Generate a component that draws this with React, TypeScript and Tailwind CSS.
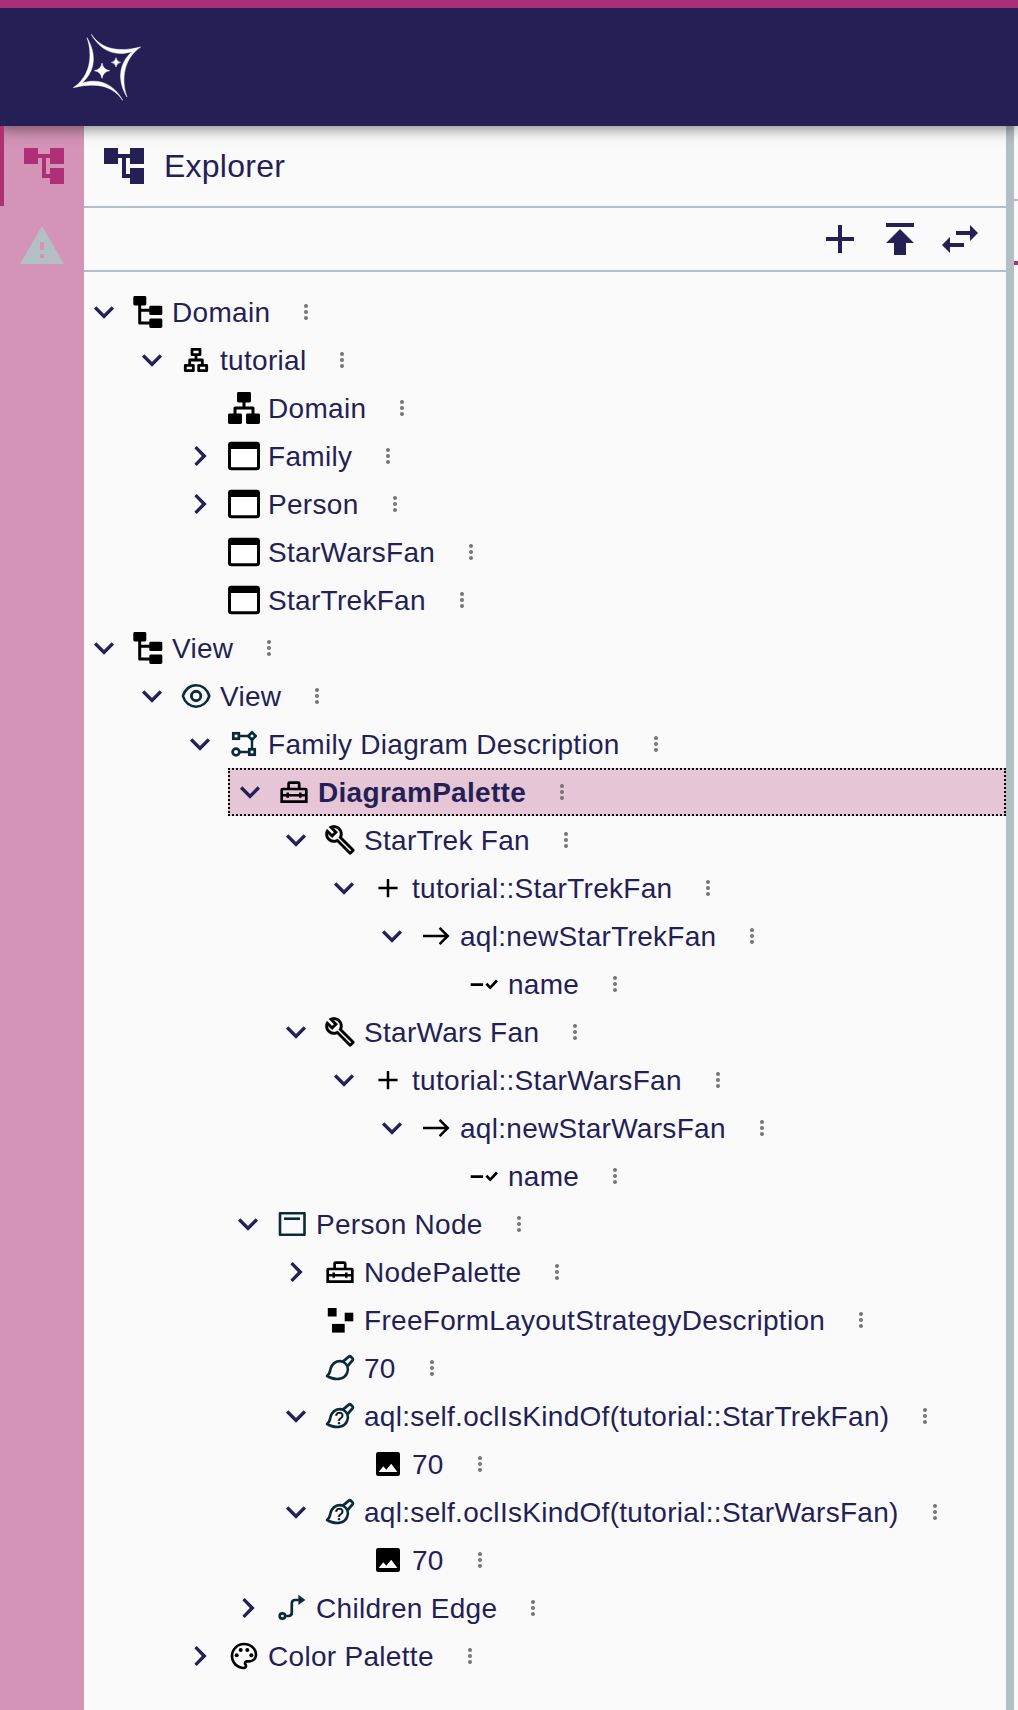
import React from "react";

type IconName =
  | "tree"
  | "package"
  | "domain"
  | "entity"
  | "eye"
  | "diagram"
  | "toolbox"
  | "wrench"
  | "plus"
  | "arrow"
  | "setValue"
  | "node"
  | "freeForm"
  | "brush"
  | "conditional"
  | "image"
  | "edge"
  | "palette";

type Item = {
  level: number;
  label: string;
  icon: IconName;
  state?: "open" | "closed";
  selected?: boolean;
};

const items: Item[] = [
  { level: 0, label: "Domain", icon: "tree", state: "open" },
  { level: 1, label: "tutorial", icon: "package", state: "open" },
  { level: 2, label: "Domain", icon: "domain" },
  { level: 2, label: "Family", icon: "entity", state: "closed" },
  { level: 2, label: "Person", icon: "entity", state: "closed" },
  { level: 2, label: "StarWarsFan", icon: "entity" },
  { level: 2, label: "StarTrekFan", icon: "entity" },
  { level: 0, label: "View", icon: "tree", state: "open" },
  { level: 1, label: "View", icon: "eye", state: "open" },
  { level: 2, label: "Family Diagram Description", icon: "diagram", state: "open" },
  { level: 3, label: "DiagramPalette", icon: "toolbox", state: "open", selected: true },
  { level: 4, label: "StarTrek Fan", icon: "wrench", state: "open" },
  { level: 5, label: "tutorial::StarTrekFan", icon: "plus", state: "open" },
  { level: 6, label: "aql:newStarTrekFan", icon: "arrow", state: "open" },
  { level: 7, label: "name", icon: "setValue" },
  { level: 4, label: "StarWars Fan", icon: "wrench", state: "open" },
  { level: 5, label: "tutorial::StarWarsFan", icon: "plus", state: "open" },
  { level: 6, label: "aql:newStarWarsFan", icon: "arrow", state: "open" },
  { level: 7, label: "name", icon: "setValue" },
  { level: 3, label: "Person Node", icon: "node", state: "open" },
  { level: 4, label: "NodePalette", icon: "toolbox", state: "closed" },
  { level: 4, label: "FreeFormLayoutStrategyDescription", icon: "freeForm" },
  { level: 4, label: "70", icon: "brush" },
  { level: 4, label: "aql:self.oclIsKindOf(tutorial::StarTrekFan)", icon: "conditional", state: "open" },
  { level: 5, label: "70", icon: "image" },
  { level: 4, label: "aql:self.oclIsKindOf(tutorial::StarWarsFan)", icon: "conditional", state: "open" },
  { level: 5, label: "70", icon: "image" },
  { level: 3, label: "Children Edge", icon: "edge", state: "closed" },
  { level: 2, label: "Color Palette", icon: "palette", state: "closed" },
];

const INK = "#0b2b3a";

const brushShape = (
  <g fill="none" stroke={INK} strokeWidth="2.7" strokeLinejoin="round">
    <path d="M3.1 24C6.8 22 5.4 17.6 7.8 13.8C10.4 9.6 15.4 7.9 19.2 9.9C23.8 12.4 24.8 17 23 21.2C20.6 26.9 13.6 28 7.8 26.1C5.8 25.5 4.6 24.8 3.1 24Z" />
    <path d="M18.8 9.6L25.2 4.4Q26 3.8 26.7 4.5L28.7 6.6Q29.3 7.3 28.7 8.1L23.6 14" />
  </g>
);

const icons: Record<IconName, React.ReactNode> = {
  tree: (
    <>
      <rect x="1.3" y="0" width="13" height="9.4" rx="1.4" />
      <rect x="17.3" y="9.7" width="13" height="9.4" rx="1.4" />
      <rect x="17.3" y="22.6" width="13" height="9.4" rx="1.4" />
      <path d="M7.7 8V27.1H18M7.7 14.2H18" fill="none" stroke="#000" strokeWidth="3" strokeLinejoin="round" />
    </>
  ),
  package: (
    <g fill="none" stroke="#000" strokeWidth="2.8" strokeLinejoin="round">
      <rect x="12" y="5.3" width="8" height="5.4" />
      <rect x="5.3" y="21.3" width="8" height="5.4" />
      <rect x="18.7" y="21.3" width="8" height="5.4" />
      <path d="M16 11.5V16M9.7 21V16H22.3V21" />
    </g>
  ),
  domain: (
    <>
      <rect x="9" y="0" width="14" height="10.4" rx="1.4" />
      <rect x="0" y="21.6" width="14" height="10.4" rx="1.4" />
      <rect x="18" y="21.6" width="14" height="10.4" rx="1.4" />
      <path d="M16 10V16M7 22V16H25V22" fill="none" stroke="#000" strokeWidth="3" strokeLinejoin="round" />
    </>
  ),
  entity: (
    <>
      <rect x="1.5" y="3.2" width="29" height="25.6" rx="1.8" fill="#fff" stroke="#000" strokeWidth="3" />
      <rect x="1.5" y="3" width="29" height="6" />
    </>
  ),
  eye: (
    <g fill="none" stroke={INK} strokeWidth="2.6">
      <path d="M2.9 16C4.8 9.4 10 5.2 16 5.2S27.2 9.4 29.3 16C27.2 22.6 22 26.7 16 26.7S4.8 22.6 2.9 16Z" strokeLinejoin="round" />
      <circle cx="16.1" cy="16" r="4.7" strokeWidth="2.9" />
    </g>
  ),
  diagram: (
    <g fill="none" stroke={INK} strokeWidth="2.7">
      <rect x="5.3" y="5.3" width="5.5" height="5.4" />
      <rect x="21.3" y="21.3" width="5.4" height="5.4" />
      <circle cx="8" cy="24" r="3.4" />
      <path d="M24 4.3L27.7 8L24 11.7L20.3 8Z" strokeLinejoin="round" />
      <path d="M11.5 8H20M24 12V21M11.8 24H20.5" strokeWidth="2.4" />
    </g>
  ),
  toolbox: (
    <g fill="none" stroke="#000" strokeWidth="2.7">
      <path d="M3.7 25.7V13.8Q3.7 13 4.5 13H27.5Q28.3 13 28.3 13.8V25.7Z" />
      <path d="M10.6 12.5V7.6Q10.6 6.6 11.6 6.6H20.2Q21.2 6.6 21.2 7.6V12.5" />
      <path d="M4 19.2H28M9.7 16.6V21.8M22.3 16.6V21.8" strokeWidth="2.5" />
    </g>
  ),
  wrench: (
    <path
      transform="scale(1.3333)"
      stroke="#000"
      strokeWidth="0.2"
      d="m22.61 18.99-9.08-9.08c.93-2.34.45-5.1-1.44-7C9.79.61 6.21.4 3.66 2.26L7.5 6.11 6.08 7.52 2.25 3.69C.39 6.23.6 9.82 2.9 12.11c1.86 1.86 4.57 2.35 6.89 1.48l9.11 9.11c.39.39 1.02.39 1.41 0l2.3-2.3c.4-.38.4-1.01 0-1.41zm-3 1.6-9.46-9.46c-.61.45-1.29.72-2 .82-1.36.2-2.79-.21-3.83-1.25C3.37 9.76 2.93 8.5 3 7.26l3.09 3.09 4.24-4.24-3.09-3.09c1.24-.07 2.49.37 3.44 1.31 1.08 1.08 1.49 2.57 1.24 3.96-.12.71-.42 1.37-.88 1.96l9.45 9.45-.88.89z"
    />
  ),
  plus: <path d="M16 7V25.3M6.4 16H25.6" fill="none" stroke="#000" strokeWidth="2.5" />,
  arrow: <path d="M3 16H28M19.6 7.9L27.8 16L19.6 24.1" fill="none" stroke="#000" strokeWidth="2.5" />,
  setValue: <path d="M2.7 16.6H15M18.4 15.8L22.2 19.6L29 12.5" fill="none" stroke="#000" strokeWidth="2.7" />,
  node: (
    <g fill="none" stroke={INK} strokeWidth="2.6">
      <rect x="4" y="5.3" width="24.5" height="21.5" strokeLinejoin="round" />
      <path d="M8 10.7H24" />
    </g>
  ),
  freeForm: (
    <>
      <rect x="3.8" y="4" width="8.8" height="8.5" />
      <rect x="20.7" y="8.7" width="8.6" height="8.6" />
      <rect x="8" y="19.9" width="12.7" height="8.7" />
    </>
  ),
  brush: brushShape,
  conditional: (
    <>
      {brushShape}
      <text
        x="15.3"
        y="23.7"
        textAnchor="middle"
        className="font-['Liberation_Sans',sans-serif] text-[16px]"
        fill="#000"
        stroke="#000"
        strokeWidth="0.4"
      >
        ?
      </text>
    </>
  ),
  image: (
    <>
      <rect x="4" y="4" width="24" height="24" rx="2.2" />
      <path d="M6.7 24L11.3 18.2L14.4 21.7L19.2 15.8L25.4 24Z" fill="#fafafa" />
    </>
  ),
  edge: (
    <>
      <g fill="none" stroke={INK} strokeWidth="2.7">
        <circle cx="6.4" cy="24" r="2.7" />
        <path d="M9.3 24H12.4Q15.8 24 15.8 20.6V11.4Q15.8 8 19.2 8H23" />
      </g>
      <path d="M22.4 2.8L29.4 8L22.4 13Z" fill={INK} />
    </>
  ),
  palette: (
    <g transform="scale(1.3333)">
      <path d="M12 22C6.49 22 2 17.51 2 12S6.49 2 12 2s10 4.04 10 9c0 3.31-2.69 6-6 6h-1.77c-.28 0-.5.22-.5.5 0 .12.05.23.13.33.41.47.64 1.06.64 1.67 0 1.38-1.12 2.5-2.5 2.5zm0-18c-4.41 0-8 3.59-8 8s3.59 8 8 8c.28 0 .5-.22.5-.5 0-.16-.08-.28-.14-.35-.41-.46-.63-1.05-.63-1.65 0-1.38 1.12-2.5 2.5-2.5H16c2.21 0 4-1.79 4-4 0-3.86-3.59-7-8-7z" />
      <circle cx="6.5" cy="11.5" r="1.5" />
      <circle cx="9.5" cy="7.5" r="1.5" />
      <circle cx="14.5" cy="7.5" r="1.5" />
      <circle cx="17.5" cy="11.5" r="1.5" />
    </g>
  ),
};

function Glyph({ d, className }: { d: string; className: string }) {
  return (
    <svg viewBox="0 0 24 24" fill="currentColor" className={`shrink-0 ${className}`}>
      <path d={d} />
    </svg>
  );
}

const ACCOUNT_TREE = "M22 11V3h-7v3H9V3H2v8h7V8h2v10h4v3h7v-8h-7v3h-2V8h2v3z";

function Row({ item }: { item: Item }) {
  return (
    <li className="flex h-12">
      <span className="shrink-0" style={{ width: item.level * 48 }} />
      <div
        className={
          item.selected
            ? "flex min-w-0 flex-1 items-center border-2 border-dotted border-black bg-[#e6c5d6]"
            : "flex min-w-0 flex-1 items-center"
        }
      >
        <span className="mr-2 size-10 shrink-0">
          {item.state === "open" && (
            <Glyph className="size-10" d="M16.59 8.59 12 13.17 7.41 8.59 6 10l6 6 6-6z" />
          )}
          {item.state === "closed" && (
            <Glyph className="size-10" d="M10 6 8.59 7.41 13.17 12l-4.58 4.59L10 18l6-6z" />
          )}
        </span>
        <svg viewBox="0 0 32 32" className="mr-2 size-8 shrink-0" fill="#000">
          {icons[item.icon]}
        </svg>
        <span
          className={
            item.selected
              ? "whitespace-nowrap pt-0.5 text-[28px] leading-10 font-bold tracking-[0.3px]"
              : "whitespace-nowrap pt-0.5 text-[28px] leading-10 tracking-[0.3px]"
          }
        >
          {item.label}
        </span>
        <Glyph
          className="ml-6 size-6 text-[#757575]"
          d="M12 8c1.1 0 2-.9 2-2s-.9-2-2-2-2 .9-2 2 .9 2 2 2m0 2c-1.1 0-2 .9-2 2s.9 2 2 2 2-.9 2-2-.9-2-2-2m0 6c-1.1 0-2 .9-2 2s.9 2 2 2 2-.9 2-2-.9-2-2-2"
        />
      </div>
    </li>
  );
}

export default function App() {
  return (
    <div className="flex h-[1710px] w-[1018px] flex-col overflow-hidden bg-[#fafafa] font-['Liberation_Sans',Arial,sans-serif] text-[#241f55]">
      <header className="relative z-10 flex h-[126px] shrink-0 items-center border-t-8 border-[#ab2f75] bg-[#241f55] pl-[73px] shadow-[0_4px_8px_-2px_rgba(0,0,0,0.2),0_8px_10px_0_rgba(0,0,0,0.14),0_2px_20px_0_rgba(0,0,0,0.12)]">
        <svg viewBox="219 100 204 201" className="h-[67px] w-[68px]" fill="#fff" stroke="#fff" strokeWidth="1.5">
          <path d="M274 101C300 140 345 158 422 139C372 172 362 235 381 289C352 240 355 190 396 153C340 170 298 145 274 101Z" />
          <path d="M368 299C342 260 297 242 220 261C270 228 280 165 261 111C290 160 287 210 246 247C302 230 344 255 368 299Z" />
          <path d="M306 187Q309 207 329 210Q309 213 306 233Q303 213 283 210Q303 207 306 187Z" />
          <path d="M348 171Q350 183 362 185Q350 187 348 199Q346 187 334 185Q346 183 348 171Z" />
        </svg>
      </header>
      <div className="flex min-h-0 flex-1">
        <nav className="flex w-[84px] shrink-0 flex-col bg-[#d394b7]">
          <div className="relative z-20 flex h-20 items-center justify-center border-l-4 border-[#ae2f76] text-[#ae2f76]">
            <Glyph className="size-12" d={ACCOUNT_TREE} />
          </div>
          <div className="flex h-20 items-center justify-center text-[#b3bfc5]">
            <Glyph className="size-12" d="M1 21h22L12 2zm12-3h-2v-2h2zm0-4h-2v-4h2z" />
          </div>
        </nav>
        <main className="flex min-w-0 flex-1 flex-col">
          <div className="flex h-[82px] shrink-0 items-center gap-4 border-b-2 border-[#b3bfc5] pl-4">
            <Glyph className="size-12" d={ACCOUNT_TREE} />
            <h1 className="text-[32px] leading-10 tracking-[0.24px]">Explorer</h1>
          </div>
          <div className="flex h-16 shrink-0 items-center justify-end gap-3 border-b-2 border-[#b3bfc5] pr-[22px]">
            <Glyph className="size-12" d="M19 13h-6v6h-2v-6H5v-2h6V5h2v6h6z" />
            <Glyph className="size-12" d="M5 4v2h14V4zm0 10h4v6h6v-6h4l-7-7z" />
            <Glyph className="size-12" d="M6.99 11 3 15l3.99 4v-3H14v-2H6.99zM21 9l-3.99-4v3H10v2h7.01v3z" />
          </div>
          <ul className="flex flex-col pt-4">
            {items.map((item, i) => (
              <Row key={i} item={item} />
            ))}
          </ul>
        </main>
        <div className="w-2 shrink-0 bg-[#b3bfc5]" />
        <aside className="flex w-1 shrink-0 flex-col">
          <div className="h-[75px] border-b-2 border-[#b3bfc5]" />
          <div className="h-16 border-b-4 border-[#ae2f76]" />
        </aside>
      </div>
    </div>
  );
}
